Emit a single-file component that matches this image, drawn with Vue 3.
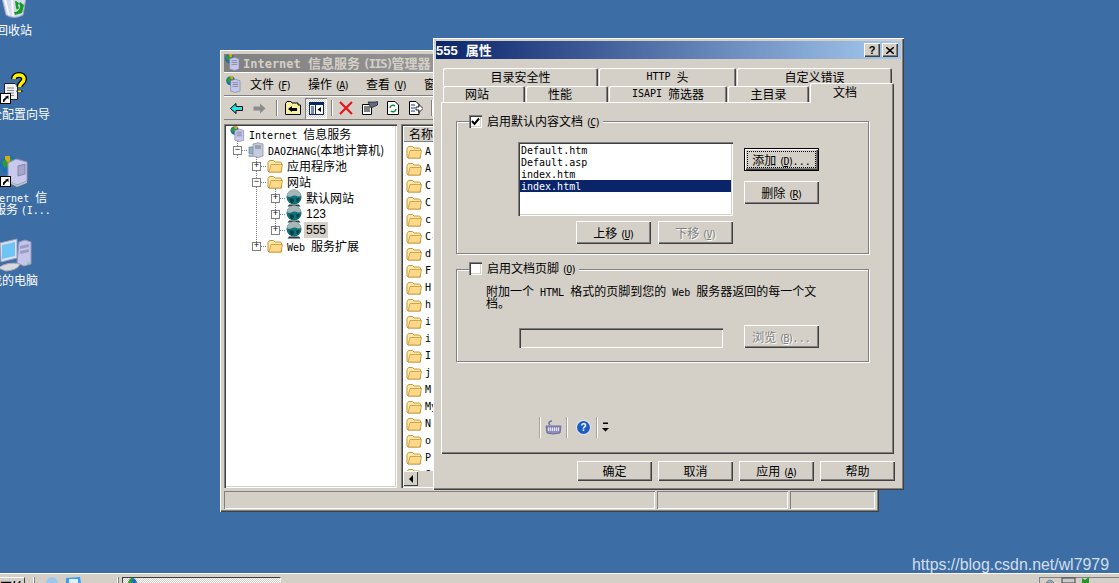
<template>
  <div class="screen">
    <svg class="defs" aria-hidden="true">
      <symbol id="folder" viewBox="0 0 16 16">
        <path d="M1 4.500 2.500 2.500H6.500L8 4H13.500L14.500 5V14H2L1 13Z" fill="#fde8a8" stroke="#c8963c" />
        <path d="M2 14 4 6.500H15.500L14 14Z" fill="#ffd98a" stroke="#c8963c" stroke-width=".8" />
      </symbol>
      <symbol id="globe" viewBox="0 0 16 18">
        <path d="M3 15.500H13L14.500 17.500H1.500Z" fill="#2b3b3d" />
        <circle cx="8" cy="8" r="7.500" fill="#0d7377" />
        <path d="M1 7C1.500 2.500 5 .5 8 .5 11 .5 14.500 2.500 15 7 12 8.500 10.500 6 8 6.500 5.500 7 4 9 1 7Z" fill="#a9b6b8" />
        <path d="M4 9.500C6 8.500 8 10 8 12 8 13 6.500 14.500 5.500 14.500 4 13 3 11 4 9.500Z" fill="#063f44" />
        <path d="M10 9.500 13.500 9 13 12 11 13.500Z" fill="#063f44" />
      </symbol>
      <symbol id="server" viewBox="0 0 16 16">
        <path d="M1 5H7V12H1Z" fill="#8fb4c8" stroke="#6a7b88" stroke-width=".7" />
        <path d="M5 2 10 .8 15 2V14L10 15.500 5 14Z" fill="#c5cddd" stroke="#8088a0" stroke-width=".7" />
        <path d="M7 4H13M7 6H13" stroke="#6c7488" stroke-width="1" />
        <path d="M0 13H6L5 15H1Z" fill="#a9adb8" />
      </symbol>
      <symbol id="iis" viewBox="0 0 17 18">
        <circle cx="6" cy="5" r="4.800" fill="#1a6ea8" />
        <path d="M2 3 5 1 8 3 6 6 3 7Z" fill="#2f9a36" />
        <path d="M5 0H9L8 4 6 3Z" fill="#e0a020" />
        <path d="M6 5 11 3.500 16 5V16L11 17.500 6 16Z" fill="#c6c8e8" stroke="#7d7fa8" stroke-width=".7" />
        <path d="M8 7H14M8 9H14M8 11H14" stroke="#8688ac" stroke-width="1" />
      </symbol>
      <symbol id="link" viewBox="0 0 11 11">
        <rect x=".5" y=".5" width="10" height="10" fill="#fff" stroke="#000" />
        <path d="M3 9V6.500L6 4H4.500L8.500 2.500V6.500L7.300 5 4.500 8V9Z" fill="#000" />
      </symbol>
    </svg>

    <main class="desk">
      <div class="shortcut recycle">
        <svg width="28" height="19" viewBox="0 0 28 19">
          <path d="M2 -2H26L23 15Q14 20 6 15Z" fill="#d5daee" stroke="#9aa0c6" />
          <path d="M5 0 9 15M12 0 13 16" stroke="#f6f7ff" stroke-width="2" />
          <path d="M15 1A5.500 5.500 0 1 1 14 12L15 15 22 13 24 5 20 2 18 5 19 8Q17 11 16 8Z" fill="#12a022" />
        </svg>
        <span class="desk-label label-recycle">回收站</span>
      </div>
      <div class="shortcut wizard">
        <svg width="27" height="31" viewBox="0 0 27 31">
          <path d="M4.500 10.500H15L17.500 13V26.500H4.500Z" fill="#f2f2f2" stroke="#222" />
          <path d="M7 15H14M7 17.500H14M7 20H14M7 22.500H14" stroke="#888" />
          <path d="M14 6C14 .5 24 .5 24 6 24 10 19.500 10 19.500 14M19.500 17.500V19" fill="none" stroke="#000" stroke-width="6" />
          <path d="M14 6C14 .5 24 .5 24 6 24 10 19.500 10 19.500 14M19.500 17.500V19" fill="none" stroke="#ffee00" stroke-width="3.500" />
          <use href="#link" x="0" y="20" width="11" height="11" />
        </svg>
        <span class="desk-label label-wizard">安全配置向导</span>
      </div>
      <div class="shortcut iis-link">
        <svg width="28" height="34" viewBox="0 0 28 34">
          <circle cx="9" cy="11" r="9" fill="#1c6fb0" />
          <path d="M2 8 8 3 14 6 8 12 4 14Z" fill="#2f9a36" />
          <path d="M5 2H10V7L8 9 5 5Z" fill="#d8a918" />
          <path d="M8 9 16 5 27 8V27L17 31 8 27Z" fill="#c8c9ec" stroke="#9394bc" />
          <path d="M18 12 25 10V20L18 22Z" fill="#a4a6cc" stroke="#8587ae" />
          <path d="M9 27 17 31 27 27 27 29 17 33 9 29Z" fill="#b9c0b8" />
          <use href="#link" x="0" y="22" width="11" height="11" />
        </svg>
        <span class="desk-label label-iis">
          <span class="label-line"><span class="m">Internet </span>信</span>
          <span class="label-line second">服务 <span class="m">(I...</span></span>
        </span>
      </div>
      <div class="shortcut computer">
        <svg width="32" height="33" viewBox="0 0 32 33">
          <path d="M19 4 25 2 31 4V26L24 28 17 25Z" fill="#c4c5e8" stroke="#9496bc" />
          <path d="M20 8 29 6V9L20 11ZM20 13 29 11V14L20 16Z" fill="#9b9dc4" />
          <rect x="27.500" y="24" width="2" height="2" fill="#6fe06a" />
          <path d="M0 5 17 1V20L1 24Z" fill="#dce0f0" stroke="#9a9dc0" />
          <path d="M2 7 15 4V18L2 21Z" fill="#6ec4f4" />
          <path d="M-2 30Q8 23 20 26 18 32 6 33Z" fill="#d8d8de" stroke="#a6a6b4" />
        </svg>
        <span class="desk-label label-computer">我的电脑</span>
      </div>

      <!-- IIS manager, behind the dialog -->
      <section class="mmc">
        <header class="mmc-title">
          <svg class="icon16" width="16" height="17"><use href="#iis" /></svg>
          <span class="mmc-title-text"><span class="m b">Internet </span>信息服务 <span class="m b key">(IIS)</span>管理器</span>
        </header>
        <nav class="mmc-menu">
          <svg class="icon16 menu-icon" width="16" height="17"><use href="#iis" /></svg>
          <span v-for="item in menus" :key="item.name" class="menu-item">{{ item.name }} <span class="m key">(<u>{{ item.key }}</u>)</span></span>
        </nav>
        <div class="mmc-tools">
          <svg class="tool nav-back" width="13" height="11" viewBox="0 0 13 11"><path d="M.5 5.500 6 .5V3.500H12.500V7.500H6V10.500Z" fill="#27e6e6" stroke="#000" /></svg>
          <svg class="tool nav-fwd" width="13" height="11" viewBox="0 0 13 11"><path d="M12.500 5.500 7 .5V3.500H.5V7.500H7V10.500Z" fill="#8c8c8c" /></svg>
          <i class="tool-sep sep-a"></i>
          <svg class="tool up" width="16" height="14" viewBox="0 0 16 14">
            <path d="M.5 2.500 2 .5H6L7 2H13V4H15.500V13.500H.5Z" fill="#f8f0a0" stroke="#000" />
            <path d="M3 8 7 5 7 7H12V10H7V11Z" fill="#000" />
          </svg>
          <span class="toggle">
            <svg width="15" height="13" viewBox="0 0 15 13">
              <rect x=".5" y=".5" width="14" height="12" fill="#fff" stroke="#0a246a" />
              <rect x="1" y="1" width="13" height="2" fill="#0a246a" />
              <rect x="6" y="3" width="1" height="9" fill="#0a246a" />
              <path d="M12 5V10L8.500 7.500Z" fill="#000" />
              <rect x="2" y="4" width="3" height="8" fill="#7c8ab8" />
            </svg>
          </span>
          <i class="tool-sep sep-b"></i>
          <svg class="tool del" width="14" height="14" viewBox="0 0 14 14"><path d="M1 1 13 13M13 1 1 13" stroke="#e8141c" stroke-width="2.200" /></svg>
          <svg class="tool props" width="16" height="14" viewBox="0 0 16 14">
            <path d="M.5 3.500H9.500V13.500H.5Z" fill="#fff" stroke="#000" />
            <path d="M2 6H8M2 8H8M2 10H8" stroke="#000" />
            <path d="M6 1H13L15.500 .5V4L9 7Z" fill="#5c6c84" stroke="#000" stroke-width=".6" />
          </svg>
          <svg class="tool refresh" width="12" height="14" viewBox="0 0 12 14">
            <path d="M.5 .5H8L11.500 4V13.500H.5Z" fill="#fff" stroke="#000" />
            <path d="M3 7A3 3 0 0 1 8 5M9 8A3 3 0 0 1 4 10" fill="none" stroke="#0a8a2a" stroke-width="1.400" />
          </svg>
          <svg class="tool export" width="14" height="14" viewBox="0 0 14 14">
            <path d="M.5 .5H7L10 3.500V13.500H.5Z" fill="#fff" stroke="#000" />
            <path d="M2 4H6M2 7H6M2 10H6" stroke="#1a2aa0" />
            <path d="M7 6H10V3.500L14 7.500 10 11.500V9H7Z" fill="#fff" stroke="#000" stroke-width=".8" />
          </svg>
          <i class="tool-sep sep-c"></i>
        </div>

        <div class="mmc-panes">
          <div class="tree sunken">
            <i class="guide guide-root"></i>
            <i class="guide guide-l1"></i>
            <i class="guide guide-l2"></i>
            <div v-for="node in tree" :key="node.id" class="tree-row" :style="{ paddingLeft: node.pad + 'px' }">
              <span v-if="node.mark" class="expander">{{ node.mark }}</span>
              <i v-if="node.mark" class="stub"></i>
              <svg class="tree-icon" width="16" :height="node.icon === 'globe' ? 18 : 16"><use :href="'#' + node.icon" /></svg>
              <span class="tree-text" :class="{ current: node.current, digits: node.digits }"><span v-if="node.latin" class="m">{{ node.latin }}</span>{{ node.text }}</span>
            </div>
          </div>
          <div class="list sunken">
            <div class="list-head"><span class="head-cell">名称</span></div>
            <div class="list-rows">
              <div v-for="(name, i) in folders" :key="i" class="list-row">
                <svg width="16" height="16"><use href="#folder" /></svg>
                <span class="m list-name">{{ name }}</span>
              </div>
            </div>
            <div class="hscroll">
              <span class="scroll-btn"><i class="arrow-left"></i></span>
            </div>
          </div>
        </div>

        <footer class="mmc-status">
          <span class="cell cell-a"></span>
          <span class="cell cell-b"></span>
          <span class="cell cell-c"></span>
        </footer>
      </section>

      <!-- properties dialog -->
      <section class="dialog">
        <header class="dlg-title">
          <span class="dlg-caption"><span class="digits-b">555</span><span class="cap-gap"> </span>属性</span>
          <span class="cap-btn"><b class="cap-q">?</b></span>
          <span class="cap-btn close">
            <svg width="8" height="7" viewBox="0 0 8 7"><path d="M0 0 8 7M8 0 0 7" stroke="#000" stroke-width="1.500" /></svg>
          </span>
        </header>

        <div class="tabs">
          <div class="tab-row row-back">
            <span v-for="t in backTabs" :key="t.text" class="tab" :style="{ width: t.w + 'px' }"><span v-if="t.latin" class="m">{{ t.latin }}</span>{{ t.text }}</span>
          </div>
          <div class="tab-row row-front">
            <span
              v-for="t in frontTabs"
              :key="t.text"
              class="tab"
              :class="{ active: t.active, lean: t.lean }"
              :style="{ width: t.w + 'px' }"
            ><span v-if="t.latin" class="m">{{ t.latin }}</span>{{ t.text }}</span>
          </div>
        </div>

        <div class="panel">
          <div class="group group-docs">
            <label class="legend">
              <span class="check"><svg width="9" height="9" viewBox="0 0 9 9"><path d="M1 4 3.500 7 8 1.500" fill="none" stroke="#000" stroke-width="2" /></svg></span>
              <span class="legend-text">启用默认内容文档 <span class="m key">(<u>C</u>)</span></span>
            </label>
            <div class="doc-row">
              <ul class="doc-list">
                <li v-for="(doc, i) in docs" :key="doc" class="m" :class="{ selected: i === 3 }">{{ doc }}</li>
              </ul>
              <div class="doc-actions">
                <button class="btn is-default"><span class="focus">添加 <span class="m key">(<u>D</u>)</span><span class="m">...</span></span></button>
                <button class="btn"><span>删除 <span class="m key">(<u>R</u>)</span></span></button>
              </div>
            </div>
            <div class="move-row">
              <button class="btn"><span>上移 <span class="m key">(<u>U</u>)</span></span></button>
              <button class="btn disabled"><span>下移 <span class="m key">(<u>V</u>)</span></span></button>
            </div>
          </div>

          <div class="group group-footer">
            <label class="legend">
              <span class="check"></span>
              <span class="legend-text">启用文档页脚 <span class="m key">(<u>O</u>)</span></span>
            </label>
            <p class="footer-note">附加一个<span class="m"> HTML </span>格式的页脚到您的<span class="m"> Web </span>服务器返回的每一个文<br />档。</p>
            <div class="browse-row">
              <span class="path-input"></span>
              <button class="btn disabled"><span>浏览 <span class="m key">(<u>B</u>)</span><span class="m">...</span></span></button>
            </div>
          </div>

          <div class="mini-bar">
            <i class="mini-sep"></i>
            <svg width="17" height="15" viewBox="0 0 17 15">
              <path d="M5 5C3 3 4 1 7 1" fill="none" stroke="#6c6ca0" stroke-width="1.500" />
              <path d="M1 6H16L15 13Q8 15 2 13Z" fill="#8d8ebc" stroke="#6c6ca0" />
              <path d="M3 7.500H14V11H3Z" fill="#e4e4f2" />
              <path d="M4 8H13M4 10H13" stroke="#5a5a90" stroke-dasharray="1 1" />
            </svg>
            <i class="mini-sep"></i>
            <span class="help-dot">?</span>
            <i class="mini-sep"></i>
            <svg width="7" height="12" viewBox="0 0 7 12"><path d="M1 1.500H6V3H1ZM0 7H7L3.500 10.500Z" fill="#000" /></svg>
          </div>
        </div>

        <div class="dlg-buttons">
          <button class="btn">确定</button>
          <button class="btn">取消</button>
          <button class="btn"><span>应用 <span class="m key">(<u>A</u>)</span></span></button>
          <button class="btn">帮助</button>
        </div>
      </section>

      <div class="watermark">https://blog.csdn.net/wl7979</div>
    </main>

    <footer class="taskbar">
      <span class="start">开始</span>
      <i class="bar-sep sep-one"></i>
      <svg class="quick" width="13" height="6" viewBox="0 0 13 6"><path d="M1 6Q2 0 7 0 12 0 13 6Z" fill="#9cc8ee" /></svg>
      <svg class="quick second" width="15" height="6" viewBox="0 0 15 6"><path d="M0 6V1L14 0 15 6Z" fill="#3c9cf0" /><path d="M3 2H12V6H3Z" fill="#dff0ff" /></svg>
      <i class="bar-sep sep-two"></i>
      <span class="task-btn">
        <svg width="9" height="5" viewBox="0 0 9 5"><path d="M0 5Q1 0 4 0L4 5Z" fill="#2f9a36" /><path d="M4 0Q8 0 9 5H4Z" fill="#1c6fb0" /></svg>
      </span>
      <span class="tray">
        <svg width="44" height="6" viewBox="0 0 44 6">
          <path d="M1 6Q5 0 9 6Z" fill="#8fb4c8" stroke="#666" stroke-width=".6" />
          <rect x="17" y="1" width="13" height="5" fill="#c8c8c8" stroke="#444" />
          <path d="M37 1 40 3 44 0 44 6H37Z" fill="#1e9a2a" />
        </svg>
      </span>
    </footer>
  </div>
</template>

<script setup>
const menus = [
  { name: "文件", key: "F" },
  { name: "操作", key: "A" },
  { name: "查看", key: "V" },
  { name: "窗口", key: "W" },
];

const tree = [
  { id: "root", pad: 2, icon: "iis", latin: "Internet ", text: "信息服务" },
  { id: "host", pad: 7, mark: "−", icon: "server", latin: "DAOZHANG", text: "(本地计算机)" },
  { id: "pool", pad: 26, mark: "+", icon: "folder", text: "应用程序池" },
  { id: "sites", pad: 26, mark: "−", icon: "folder", text: "网站" },
  { id: "s1", pad: 45, mark: "+", icon: "globe", text: "默认网站" },
  { id: "s2", pad: 45, mark: "+", icon: "globe", text: "123", digits: true },
  { id: "s3", pad: 45, mark: "+", icon: "globe", text: "555", digits: true, current: true },
  { id: "ext", pad: 26, mark: "+", icon: "folder", latin: "Web ", text: "服务扩展" },
];

const folders = ["A", "A", "C", "C", "c", "C-", "d", "F", "H", "h", "i", "i", "I", "j", "M", "My", "N", "o", "P", "S"];

const backTabs = [
  { w: 155, text: "目录安全性" },
  { w: 137, latin: "HTTP ", text: "头" },
  { w: 155, text: "自定义错误" },
];

const frontTabs = [
  { w: 82, text: "网站", lean: true },
  { w: 82, text: "性能", lean: true },
  { w: 118, latin: "ISAPI ", text: "筛选器" },
  { w: 81, text: "主目录" },
  { w: 84, text: "文档", active: true, lean: true },
];

const docs = ["Default.htm", "Default.asp", "index.htm", "index.html"];
</script>

<style>
html,
body {
  margin: 0;
  background: #3c6ea5;
}
</style>

<style scoped>
.screen {
  width: 1119px;
  height: 583px;
  overflow: hidden;
  display: flex;
  flex-direction: column;
  background: #3c6ea5;
  font: 12px/12px "Noto Sans CJK SC", sans-serif;
  color: #000;
}

.defs {
  position: absolute;
  width: 0;
  height: 0;
}

.m {
  font-family: "DejaVu Sans Mono", monospace;
  font-size: 10px;
  line-height: 0;
  white-space: pre;
}

.key {
  letter-spacing: -1.500px;
}

.b {
  font-size: 12px;
  font-weight: 700;
}

.desk {
  position: relative;
  flex: 1;
  overflow: hidden;
}

/* desktop shortcuts */
.shortcut {
  position: absolute;
}

.shortcut svg {
  display: block;
  overflow: visible;
}

.recycle { left: 0; top: 0; }
.wizard { left: 0; top: 73px; }
.iis-link { left: 0; top: 154px; }
.computer { left: 0; top: 238px; }

.desk-label {
  position: absolute;
  color: #fff;
  white-space: pre;
}

.label-recycle { left: -4px; top: 24px; }
.label-wizard { left: -22px; top: 35px; }
.label-iis { left: -19px; top: 37px; }
.label-computer { left: -10px; top: 36px; }

.label-line {
  display: block;
  height: 12px;
}

.label-line.second {
  margin-left: 13px;
}

/* bevels */
.sunken {
  box-sizing: border-box;
  padding: 2px;
  box-shadow: inset 1px 1px #808080, inset 2px 2px #404040, inset -1px -1px #fff, inset -2px -2px #d4d0c8;
}

.btn {
  display: flex;
  align-items: center;
  justify-content: center;
  box-sizing: border-box;
  width: 75px;
  height: 23px;
  padding: 0;
  border: 0;
  background: #d4d0c8;
  box-shadow: inset 1px 1px #fff, inset -1px -1px #404040, inset -2px -2px #808080;
  font: inherit;
  color: #000;
  white-space: pre;
}

.btn.is-default {
  border: 1px solid #000;
}

.focus {
  display: block;
  text-align: center;
  white-space: pre;
  width: 67px;
  height: 15px;
  line-height: 15px;
  outline: 1px dotted #000;
}

.btn.disabled {
  color: #808080;
  text-shadow: 1px 1px 0 #fff;
}

/* IIS manager window */
.mmc {
  position: absolute;
  left: 220px;
  top: 50px;
  width: 659px;
  height: 462px;
  box-sizing: border-box;
  padding: 4px 4px 3px 4px;
  display: flex;
  flex-direction: column;
  background: #d4d0c8;
  box-shadow: inset 1px 1px #fff, inset -1px -1px #404040, inset -2px -2px #808080;
}

.mmc-title {
  height: 18px;
  flex: none;
  box-sizing: border-box;
  padding-bottom: 1px;
  display: flex;
  align-items: center;
  gap: 3px;
  background: linear-gradient(90deg, #808080, #c0c0c0);
  color: #d4d0c8;
  font-size: 13px;
  font-weight: 700;
  white-space: pre;
  overflow: hidden;
}

.icon16 {
  flex: none;
}

.mmc-menu {
  height: 24px;
  flex: none;
  box-sizing: border-box;
  display: flex;
  align-items: center;
  white-space: pre;
  box-shadow: inset 0 1px #fff, inset 0 -1px #808080;
  overflow: hidden;
}

.menu-icon {
  margin-left: 1px;
  margin-right: 9px;
}

.menu-item {
  width: 58px;
  flex: none;
}

.mmc-tools {
  height: 24px;
  flex: none;
  display: flex;
  align-items: center;
  box-shadow: inset 0 1px #fff, inset 0 -1px #808080;
  overflow: hidden;
}

.tool {
  flex: none;
}

.nav-back { margin-left: 6px; }
.nav-fwd { margin-left: 10px; }

.tool-sep {
  flex: none;
  width: 1px;
  height: 16px;
  background: #808080;
  border-right: 1px solid #fff;
}

.sep-a { margin-left: 10px; }
.up { margin-left: 7px; }

.toggle {
  flex: none;
  margin-left: 4px;
  width: 22px;
  height: 21px;
  display: flex;
  align-items: center;
  justify-content: center;
  background: conic-gradient(#fff 25%, #d4d0c8 0 50%, #fff 0 75%, #d4d0c8 0) 0 0 / 2px 2px;
  box-shadow: inset 1px 1px #808080, inset -1px -1px #fff;
}

.sep-b { margin-left: 4px; }
.del { margin-left: 6px; }
.props { margin-left: 9px; }
.refresh { margin-left: 9px; }
.export { margin-left: 10px; }
.sep-c { margin-left: 8px; }

.mmc-panes {
  height: 364px;
  flex: none;
  margin-top: 4px;
  display: flex;
  gap: 4px;
}

.tree {
  position: relative;
  width: 173px;
  flex: none;
  background: #fff;
  padding-top: 2px;
}

.guide {
  position: absolute;
  width: 0;
  border-left: 1px dotted #808080;
}

.guide-root { left: 13px; top: 16px; height: 18px; }
.guide-l1 { left: 32px; top: 32px; height: 90px; }
.guide-l2 { left: 51px; top: 64px; height: 42px; }

.tree-row {
  position: relative;
  height: 16px;
  display: flex;
  align-items: center;
  white-space: pre;
}

.expander {
  position: relative;
  z-index: 1;
  flex: none;
  box-sizing: border-box;
  width: 9px;
  height: 9px;
  border: 1px solid #808080;
  background: #fff;
  font: 9px/7px "Liberation Mono", monospace;
  text-align: center;
}

.stub {
  flex: none;
  width: 5px;
  border-top: 1px dotted #808080;
}

.tree-icon {
  flex: none;
  margin-left: 1px;
}

.tree-text {
  margin-left: 2px;
  padding: 2px;
  line-height: 12px;
}

.tree-text.digits {
  font-family: "Liberation Sans", sans-serif;
}

.tree-text.current {
  background: #d4d0c8;
}

.list {
  flex: 1;
  min-width: 0;
  display: flex;
  flex-direction: column;
  background: #fff;
  overflow: hidden;
}

.list-head {
  height: 16px;
  flex: none;
  background: #d4d0c8;
  box-shadow: inset 1px 1px #fff, inset 0 -1px #808080;
}

.head-cell {
  display: block;
  padding: 2px 0 0 6px;
}

.list-rows {
  flex: 1;
  min-height: 0;
  overflow: hidden;
  padding-top: 1px;
}

.list-row {
  height: 17px;
  display: flex;
  align-items: center;
  padding-left: 3px;
}

.list-name {
  margin-left: 3px;
  line-height: 12px;
}

.hscroll {
  height: 15px;
  flex: none;
  background: #d4d0c8;
}

.scroll-btn {
  display: flex;
  align-items: center;
  justify-content: center;
  width: 15px;
  height: 15px;
  box-shadow: inset 1px 1px #fff, inset -1px -1px #404040;
}

.arrow-left {
  width: 0;
  height: 0;
  border: 4px solid transparent;
  border-left: 0;
  border-right-color: #000;
}

.mmc-status {
  height: 18px;
  flex: none;
  margin-top: 3px;
  display: flex;
  gap: 2px;
}

.cell {
  flex: none;
  box-shadow: inset 1px 1px #808080, inset -1px -1px #fff;
}

.cell-a { width: 431px; }
.cell-b { width: 131px; }
.cell-c { width: 85px; }

/* properties dialog */
.dialog {
  position: absolute;
  left: 433px;
  top: 38px;
  width: 471px;
  height: 452px;
  box-sizing: border-box;
  padding: 3px;
  display: flex;
  flex-direction: column;
  background: #d4d0c8;
  box-shadow: inset 1px 1px #fff, inset -1px -1px #404040, inset -2px -2px #808080;
}

.dlg-title {
  height: 18px;
  flex: none;
  display: flex;
  align-items: center;
  gap: 2px;
  padding-right: 3px;
  background: linear-gradient(90deg, #0a246a, #a6caf0);
}

.dlg-caption {
  flex: 1;
  color: #fff;
  font-size: 13px;
  font-weight: 700;
  white-space: pre;
}

.digits-b {
  font-family: "Liberation Sans", sans-serif;
  font-size: 13px;
}

.cap-gap {
  display: inline-block;
  width: 8px;
}

.cap-btn {
  display: flex;
  align-items: center;
  justify-content: center;
  width: 16px;
  height: 14px;
  background: #d4d0c8;
  box-shadow: inset 1px 1px #fff, inset -1px -1px #404040, inset -2px -2px #808080;
}

.cap-q {
  font: 700 11px/11px "Liberation Sans", sans-serif;
}

.tabs {
  margin: 9px 0 0 5px;
  flex: none;
}

.tab-row {
  display: flex;
  gap: 1px;
  padding-left: 2px;
}

.row-back {
  height: 18px;
}

.row-front {
  position: relative;
  z-index: 1;
  height: 16px;
}

.tab {
  box-sizing: border-box;
  flex: none;
  display: flex;
  align-items: center;
  justify-content: center;
  white-space: pre;
  height: 100%;
  border-radius: 2px 2px 0 0;
  background: #d4d0c8;
  box-shadow: inset 1px 1px #fff, inset -1px 0 #404040, inset -2px 0 #808080;
}

.tab.lean {
  padding-right: 14px;
}

.tab.active {
  height: 20px;
  margin-top: -3px;
  padding-bottom: 3px;
}

.panel {
  position: relative;
  flex: none;
  box-sizing: border-box;
  width: 453px;
  height: 352px;
  margin-left: 5px;
  padding: 19px 0 0 15px;
  background: #d4d0c8;
  box-shadow: inset 1px 1px #fff, inset -1px -1px #404040, inset -2px -2px #808080;
}

.group {
  position: relative;
  box-sizing: border-box;
  width: 413px;
  border: 1px solid #808080;
  box-shadow: inset 1px 1px #fff, 1px 1px #fff;
}

.group-docs {
  height: 133px;
  padding: 20px 0 0 61px;
}

.group-footer {
  height: 93px;
  margin-top: 15px;
  padding: 15px 0 0 29px;
}

.legend {
  position: absolute;
  left: 12px;
  top: -7px;
  display: flex;
  align-items: center;
  gap: 5px;
  padding-right: 4px;
  background: #d4d0c8;
  white-space: pre;
}

.legend-text {
  margin-top: -2px;
}

.group-footer .legend {
  top: -8px;
}

.check {
  box-sizing: border-box;
  width: 13px;
  height: 13px;
  display: flex;
  align-items: center;
  justify-content: center;
  background: #fff;
  box-shadow: inset 1px 1px #808080, inset 2px 2px #404040, inset -1px -1px #fff, inset -2px -2px #d4d0c8;
}

.doc-row {
  display: flex;
  gap: 11px;
}

.doc-list {
  box-sizing: border-box;
  width: 215px;
  height: 74px;
  margin: 0;
  padding: 2px;
  list-style: none;
  background: #fff;
  box-shadow: inset 1px 1px #808080, inset 2px 2px #404040, inset -1px -1px #fff, inset -2px -2px #d4d0c8;
}

.doc-list li {
  height: 12px;
  line-height: 14px;
  padding-left: 1px;
}

.doc-list li.selected {
  background: #0a246a;
  color: #fff;
}

.doc-actions {
  margin-top: 6px;
  display: flex;
  flex-direction: column;
  gap: 10px;
}

.move-row {
  width: 215px;
  margin-top: 5px;
  display: flex;
  justify-content: flex-end;
  gap: 7px;
}

.footer-note {
  margin: 0;
  white-space: pre;
}

.browse-row {
  margin: 16px 0 0 33px;
  display: flex;
  align-items: flex-end;
  gap: 21px;
}

.path-input {
  width: 204px;
  height: 20px;
  box-shadow: inset 1px 1px #808080, inset 2px 2px #404040, inset -1px -1px #fff, inset -2px -2px #d4d0c8;
}

.mini-bar {
  margin: 54px 0 0 83px;
  display: flex;
  align-items: center;
  gap: 4px;
  height: 22px;
}

.mini-sep {
  width: 1px;
  height: 21px;
  background: #fff;
  border-left: 1px solid #a8a49c;
}

.help-dot {
  width: 13px;
  height: 13px;
  border-radius: 50%;
  margin: 0 2px 0 5px;
  background: #1c5cc0;
  box-shadow: 0 0 0 1px #dfe6f6;
  color: #fff;
  font: 700 10px/13px "Liberation Sans", sans-serif;
  text-align: center;
}

.dlg-buttons {
  margin: 7px 6px 0 0;
  display: flex;
  justify-content: flex-end;
  gap: 6px;
}

.dlg-buttons .btn {
  height: 20px;
}

.watermark {
  position: absolute;
  left: 912px;
  top: 556px;
  font: 15.900px/17px "Liberation Sans", sans-serif;
  color: #d3dfeb;
  white-space: nowrap;
}

/* taskbar */
.taskbar {
  position: relative;
  flex: none;
  height: 10px;
  box-sizing: border-box;
  border-top: 1px solid #fff;
  display: flex;
  align-items: flex-end;
  background: #d4d0c8;
  overflow: hidden;
}

.start {
  width: 25px;
  height: 6px;
  flex: none;
  overflow: hidden;
  padding-top: 3px;
  border-top: 1px solid #fff;
  border-right: 1px solid #404040;
  font-weight: 700;
  line-height: 12px;
  text-align: right;
  box-sizing: border-box;
}

.bar-sep {
  flex: none;
  width: 1px;
  height: 6px;
  background: #fff;
  border-right: 1px solid #808080;
}

.sep-one { margin-left: 8px; }
.quick { flex: none; margin-left: 10px; }
.quick.second { margin-left: 8px; }
.sep-two { margin-left: 36px; }

.task-btn {
  flex: none;
  width: 159px;
  height: 6px;
  margin-left: 3px;
  box-sizing: border-box;
  padding-left: 5px;
  background: conic-gradient(#fff 25%, #d4d0c8 0 50%, #fff 0 75%, #d4d0c8 0) 0 0 / 2px 2px;
  border-top: 1px solid #404040;
  border-left: 1px solid #404040;
  border-right: 1px solid #fff;
  display: flex;
  align-items: flex-end;
}

.tray {
  flex: none;
  margin-left: auto;
  width: 80px;
  height: 6px;
  box-sizing: border-box;
  padding-left: 5px;
  border-top: 1px solid #808080;
  border-left: 1px solid #808080;
  display: flex;
  align-items: flex-end;
}
</style>
